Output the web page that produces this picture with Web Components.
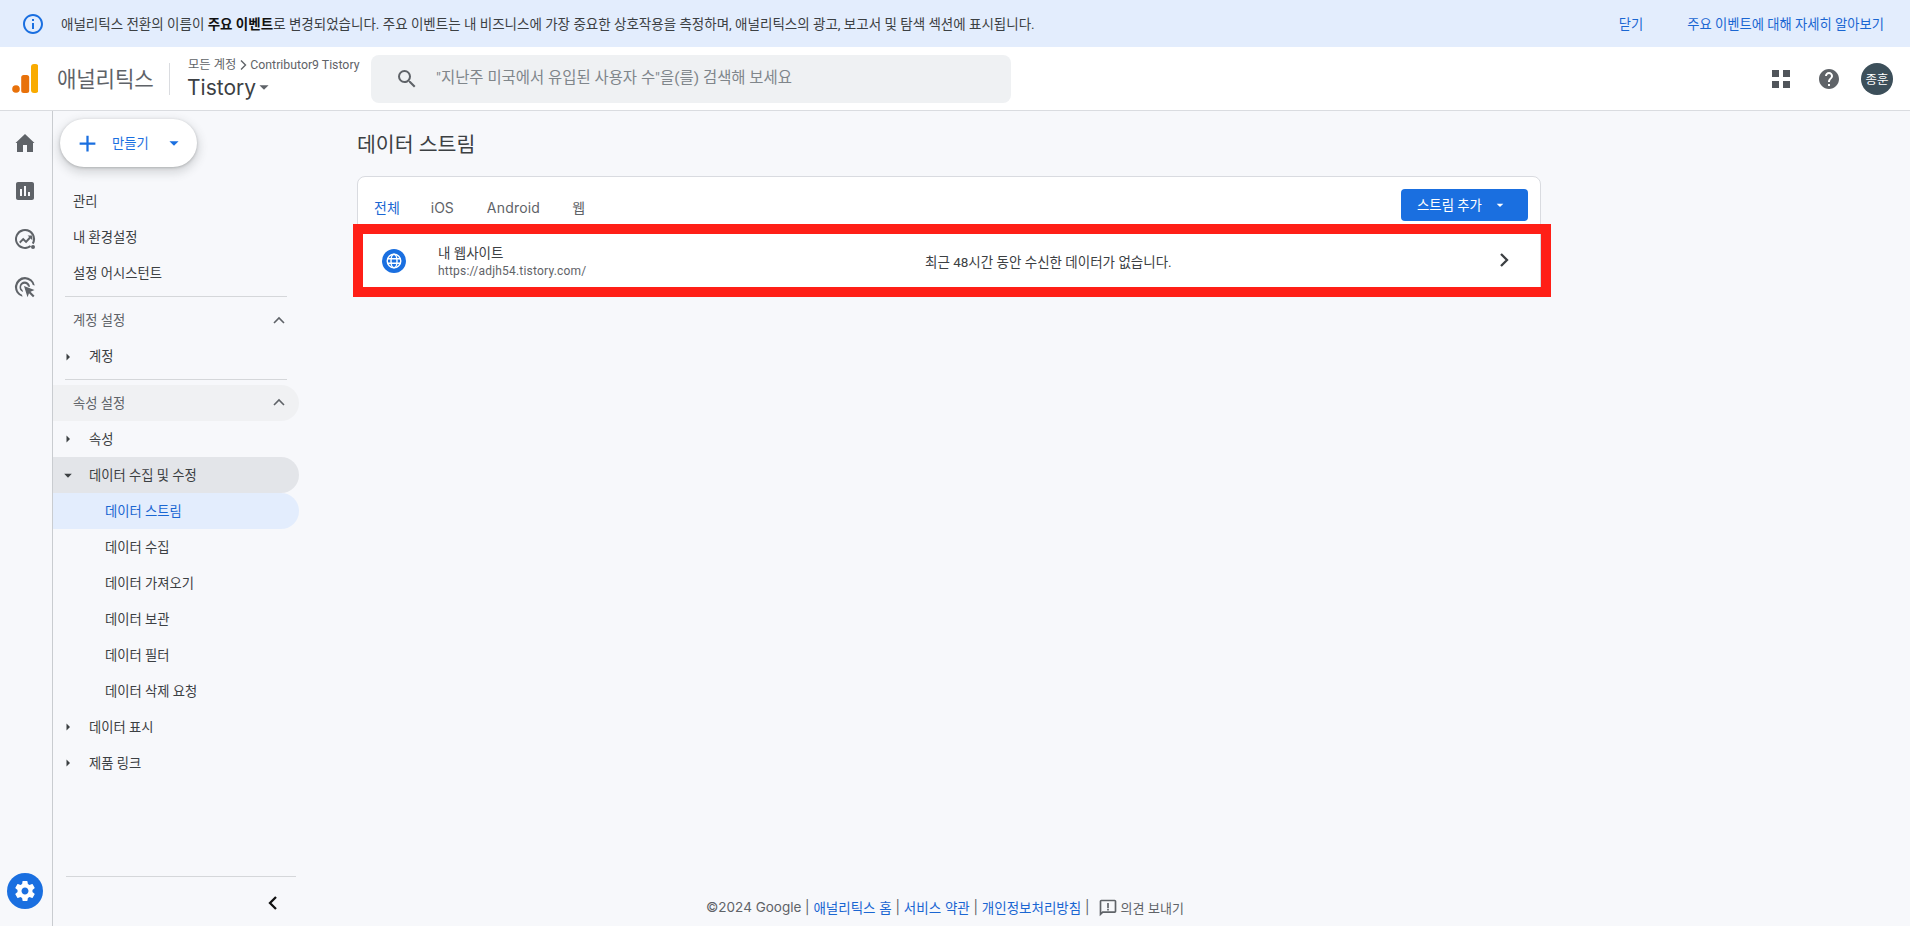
<!DOCTYPE html>
<html lang="ko"><head><meta charset="utf-8"><title>데이터 스트림</title>
<style>
html,body{margin:0;height:100%;overflow:hidden}
body{font-family:Roboto,"Noto Sans CJK KR",sans-serif;background:#f7f8fb;color:#202124}
</style></head><body>
<ga-app>
<ga-banner slot="banner"></ga-banner>
<ga-header slot="header"></ga-header>
<ga-rail slot="rail"></ga-rail>
<ga-sidebar slot="sidebar">
  <ga-nav plain>관리</ga-nav>
  <ga-nav plain>내 환경설정</ga-nav>
  <ga-nav plain>설정 어시스턴트</ga-nav>
  <ga-sep></ga-sep>
  <ga-nav section>계정 설정</ga-nav>
  <ga-nav caret="right">계정</ga-nav>
  <ga-sep tight></ga-sep>
  <ga-nav section hover>속성 설정</ga-nav>
  <ga-nav caret="right">속성</ga-nav>
  <ga-nav caret="down" open>데이터 수집 및 수정</ga-nav>
  <ga-nav child active>데이터 스트림</ga-nav>
  <ga-nav child>데이터 수집</ga-nav>
  <ga-nav child>데이터 가져오기</ga-nav>
  <ga-nav child>데이터 보관</ga-nav>
  <ga-nav child>데이터 필터</ga-nav>
  <ga-nav child>데이터 삭제 요청</ga-nav>
  <ga-nav caret="right">데이터 표시</ga-nav>
  <ga-nav caret="right">제품 링크</ga-nav>
</ga-sidebar>
<ga-main slot="main">
  <ga-stream-card></ga-stream-card>
</ga-main>
</ga-app>
<script>
function def(name,html){
  customElements.define(name,class extends HTMLElement{
    constructor(){super();this.attachShadow({mode:'open'}).innerHTML=typeof html==='function'?html(this):html;}
  });
}
const G=`<path d="M7 10l5 5 5-5z"/>`;
const INTER=`Inter,"Noto Sans CJK KR",sans-serif`;
def('ga-app',`<style>
:host{display:flex;flex-direction:column;height:926px;width:1910px}
.body{flex:1;display:flex;min-height:0}
</style><slot name="banner"></slot><slot name="header"></slot>
<div class="body"><slot name="rail"></slot><slot name="sidebar"></slot><slot name="main"></slot></div>`);

def('ga-banner',`<style>
:host{display:flex;align-items:center;height:47px;box-sizing:border-box;padding-bottom:1px;background:#e3edfd;font-size:13.500px;color:#3c4043;flex:none}
svg{width:24px;height:24px;fill:#1a6fe0;margin-left:21px;margin-right:16px;flex:none;position:relative;top:1px}
.t{flex:1;white-space:nowrap}
b{color:#111;font-weight:700}
a{color:#1a66d2;margin-right:44px;white-space:nowrap;font-size:13.300px}
a:last-child{margin-right:26px}
</style>
<svg viewBox="0 0 24 24"><path d="M11 7h2v2h-2zm0 4h2v6h-2zm1-9C6.480 2 2 6.480 2 12s4.480 10 10 10 10-4.480 10-10S17.520 2 12 2zm0 18c-4.410 0-8-3.590-8-8s3.590-8 8-8 8 3.590 8 8-3.590 8-8 8z"/></svg>
<span class="t">애널리틱스 전환의 이름이 <b>주요 이벤트</b>로 변경되었습니다. 주요 이벤트는 내 비즈니스에 가장 중요한 상호작용을 측정하며, 애널리틱스의 광고, 보고서 및 탐색 섹션에 표시됩니다.</span>
<a>닫기</a><a>주요 이벤트에 대해 자세히 알아보기</a>`);

def('ga-header',`<style>
:host{display:flex;align-items:center;height:64px;box-sizing:border-box;background:#fff;border-bottom:1px solid #dadce0;flex:none;position:relative;color:#5f6368}
.logo{width:26px;height:29px;margin-left:12px;flex:none}
.name{font-size:21.200px;margin-left:19px;width:96px;white-space:nowrap;letter-spacing:-.2px;position:relative;top:-1px}
.div{width:1px;height:32px;background:#dadce0;margin:0 18px 0 16px;flex:none}
.acct{width:183px;flex:none;line-height:1}
.crumb{font-size:12.300px;display:flex;align-items:center;white-space:nowrap;height:16px;position:relative;top:1px}
.crumb svg{width:14px;height:14px;fill:none;stroke:#5f6368;stroke-width:1.400}
.prop{font-family:${INTER};font-size:21px;color:#3c4043;display:flex;align-items:center;height:28px;margin:1px 0 0 -1px}
.prop svg{width:22px;height:22px;fill:#5f6368;margin-left:-3px}
.search{width:640px;height:48px;background:#eff1f3;border-radius:8px;display:flex;align-items:center;flex:none}
.search svg{width:24px;height:24px;fill:#5f6368;margin-left:24px;margin-right:17px}
.search span{font-size:15.450px;color:#80868b;position:relative;top:-3px;white-space:nowrap}
.r{margin-left:auto;display:flex;align-items:center}
.apps{width:18px;height:18px;display:grid;grid-template-columns:7px 7px;grid-auto-rows:7px;gap:4px}
.apps i{background:#50555a}
.help{width:24px;height:24px;fill:#5f6368;margin-left:27px;margin-right:20px}
.av{width:32px;height:32px;border-radius:50%;background:#3c4f5a;color:#fff;font-size:12.500px;display:flex;align-items:center;justify-content:center;margin-right:17px;white-space:nowrap}
</style>
<svg class="logo" viewBox="0 0 26 29"><circle cx="4" cy="25" r="3.800" fill="#e8710a"/><rect x="9.200" y="11" width="8" height="18" rx="2.500" fill="#e8710a"/><rect x="19" y="0" width="7.400" height="29" rx="3" fill="#f9ab00"/></svg>
<div class="name">애널리틱스</div><div class="div"></div>
<div class="acct"><div class="crumb">모든 계정<svg viewBox="0 0 14 14"><path d="M5 2.500l4.500 4.500L5 11.500"/></svg>Contributor9 Tistory</div>
<div class="prop">Tistory<svg viewBox="0 0 24 24">${G}</svg></div></div>
<div class="search"><svg viewBox="0 0 24 24"><path d="M15.500 14h-.79l-.28-.27A6.470 6.470 0 0 0 16 9.500 6.500 6.500 0 1 0 9.500 16c1.610 0 3.090-.59 4.230-1.570l.27.28v.79l5 4.990L20.490 19l-4.990-5zm-6 0C7.010 14 5 11.990 5 9.500S7.010 5 9.500 5 14 7.010 14 9.500 11.990 14 9.500 14z"/></svg><span>"지난주 미국에서 유입된 사용자 수"을(를) 검색해 보세요</span></div>
<div class="r"><div class="apps"><i></i><i></i><i></i><i></i></div>
<svg class="help" viewBox="0 0 24 24"><path d="M12 2C6.480 2 2 6.480 2 12s4.480 10 10 10 10-4.480 10-10S17.520 2 12 2zm1 17h-2v-2h2v2zm2.070-7.750l-.9.92C13.450 12.900 13 13.500 13 15h-2v-.5c0-1.100.45-2.100 1.170-2.830l1.240-1.260c.37-.36.59-.86.59-1.410 0-1.100-.9-2-2-2s-2 .9-2 2H8c0-2.210 1.790-4 4-4s4 1.790 4 4c0 .88-.36 1.680-.93 2.250z"/></svg>
<div class="av">종훈</div></div>`);

def('ga-rail',`<style>
:host{display:flex;flex-direction:column;align-items:center;width:52px;border-right:1px solid #c9ccd0;flex:none;box-sizing:content-box;padding-top:20px}
svg.i{width:24px;height:24px;fill:#5f6368;margin:0 2px 24px 0;flex:none}
.s{margin-top:auto;margin-bottom:17px;margin-right:2px;width:36px;height:36px;border-radius:50%;background:#1a6fe0;display:flex;align-items:center;justify-content:center}
.s svg{width:24px;height:24px;fill:#fff}
</style>
<svg class="i" viewBox="0 0 24 24"><path d="M10 21v-7h4v7h6v-9h1.500L12 3 2.500 12H4v9z"/></svg>
<svg class="i" viewBox="0 0 24 24"><path d="M19 3H5c-1.100 0-2 .9-2 2v14c0 1.100.9 2 2 2h14c1.100 0 2-.9 2-2V5c0-1.100-.9-2-2-2zM9 17H7v-7h2v7zm4 0h-2V7h2v10zm4 0h-2v-4h2v4z"/></svg>
<svg class="i" viewBox="0 0 24 24"><path d="M12 2a10 10 0 1 0 6.200 17.840l-1.300-1.500A8 8 0 1 1 20 12c0 1.500-.4 2.900-1.100 4.100l1.700 1.050A10 10 0 0 0 12 2z"/><path d="M6.200 14.700l4-4 2.800 2.800 3.100-3.400-1.500-1.500h4.700v4.700l-1.700-1.700-4.500 4.700-2.900-2.900-3 3z"/><circle cx="20" cy="20" r="2"/></svg>
<svg class="i" viewBox="0 0 24 24"><path d="M12 2a10 10 0 0 0-2.500 19.700l-.5-2A8 8 0 1 1 19.800 10l2 .5A10 10 0 0 0 12 2z"/><path d="M12 6.500a5.500 5.500 0 0 0-2 10.600l-.5-2.100a3.500 3.500 0 1 1 5.500-3.500l2 .5A5.500 5.500 0 0 0 12 6.500z"/><path d="M11 11l10.500 4-4 1.700 4 4-1.500 1.500-4-4-1.500 4z"/></svg>
<div class="s"><svg viewBox="0 0 24 24"><path d="M19.430 12.980c.04-.32.07-.64.07-.98s-.03-.66-.07-.98l2.110-1.650c.19-.15.24-.42.12-.64l-2-3.460c-.12-.22-.39-.3-.61-.22l-2.490 1c-.52-.4-1.080-.73-1.690-.98l-.38-2.650A.488.488 0 0 0 14 2h-4c-.25 0-.46.18-.49.42l-.38 2.650c-.61.25-1.170.59-1.690.98l-2.490-1c-.23-.09-.49 0-.61.22l-2 3.460c-.13.22-.07.49.12.64l2.110 1.650c-.04.32-.07.65-.07.98s.03.66.07.98l-2.110 1.650c-.19.15-.24.42-.12.64l2 3.460c.12.22.39.3.61.22l2.490-1c.52.4 1.080.73 1.690.98l.38 2.650c.03.24.24.42.49.42h4c.25 0 .46-.18.49-.42l.38-2.650c.61-.25 1.170-.59 1.690-.98l2.490 1c.23.09.49 0 .61-.22l2-3.460c.12-.22.07-.49-.12-.64l-2.110-1.650zM12 15.500c-1.930 0-3.500-1.570-3.500-3.500s1.570-3.500 3.500-3.500 3.500 1.570 3.500 3.500-1.570 3.500-3.500 3.500z"/></svg></div>`);

def('ga-sidebar',`<style>
:host{display:flex;flex-direction:column;width:247px;flex:none}
.create{width:137px;height:48px;margin:8px 0 16px 7px;border-radius:24px;background:#fff;box-shadow:0 1px 3px rgba(60,64,67,.3),0 4px 8px 3px rgba(60,64,67,.15);display:flex;align-items:center;color:#1a6fe0;font-size:13.300px;flex:none;box-sizing:border-box;padding-bottom:1px}
.create svg.p{width:27px;height:27px;fill:#1a6fe0;margin-left:14px;margin-right:11px;margin-top:1px}
.create svg.c{width:22px;height:22px;fill:#1a6fe0;margin-left:14px;margin-top:1px}
nav{display:flex;flex-direction:column}
.bot{margin-top:auto;margin-left:13px;width:230px;border-top:1px solid #d5d7da;height:50px;display:flex;justify-content:flex-end;box-sizing:border-box;padding-right:11px;flex:none}
.bot svg{width:24px;height:24px;fill:none;stroke:#111;stroke-width:2.300;margin-top:14px}
</style>
<div class="create"><svg class="p" viewBox="0 0 24 24"><path d="M19 13h-6v6h-2v-6H5v-2h6V5h2v6h6v2z"/></svg>만들기<svg class="c" viewBox="0 0 24 24">${G}</svg></div>
<nav><slot></slot></nav>
<div class="bot"><svg viewBox="0 0 24 24"><path d="M15 6l-6 6 6 6"/></svg></div>`);

def('ga-sep',`<style>:host{display:block;height:1px;background:#d5d7da;margin:5.250px 12px;width:222px}
:host([tight]){margin:4.750px 12px 4.750px}</style>`);

def('ga-nav',el=>{
  const caret=el.getAttribute('caret');
  const sec=el.hasAttribute('section');
  const pad=el.hasAttribute('child')?52:sec||el.hasAttribute('plain')?20:36;
  const bg=el.hasAttribute('active')?'#e3edfd':el.hasAttribute('open')?'#e3e5e9':el.hasAttribute('hover')?'#f0f1f3':'transparent';
  const col=el.hasAttribute('active')?'#1a66d2':sec?'#5f6368':'#3c4043';
  return `<style>
:host{display:flex;align-items:center;height:36px;width:246px;font-size:13.300px;box-sizing:border-box;padding-left:${pad}px;padding-bottom:2px;background:${bg};color:${col};border-radius:0 18px 18px 0;position:relative;white-space:nowrap;flex:none}
.car{position:absolute;left:7px;top:10px;width:16px;height:16px;fill:#3c4043}
.up{position:absolute;right:9px;top:7px;width:22px;height:22px;fill:none;stroke:#5f6368;stroke-width:1.600}
</style>
${caret==='right'?'<svg class="car" viewBox="0 0 16 16"><path d="M6.500 4.500L10 8l-3.500 3.500z"/></svg>':''}
${caret==='down'?'<svg class="car" viewBox="0 0 16 16"><path d="M4.200 6.800h7.600L8 10.800z"/></svg>':''}
<slot></slot>
${sec?'<svg class="up" viewBox="0 0 22 22"><path d="M6 13l5-5 5 5"/></svg>':''}`;
});

def('ga-main',`<style>
:host{flex:1;display:flex;flex-direction:column;padding:0 369px 0 57px;min-width:0;box-sizing:border-box}
h1{font-size:20.500px;font-weight:400;color:#3c4043;margin:20px 0 0;line-height:28px;flex:none;white-space:nowrap}
.f{margin-top:auto;height:36px;padding-right:8px;display:flex;align-items:center;justify-content:center;font-family:${INTER};font-size:13.500px;color:#5f6368;white-space:pre;flex:none;position:relative;top:-1px}
.f a{color:#1a66d2}
.f svg{width:20px;height:20px;fill:#5f6368;margin:2px 3px 0 8px}
.f .fb{font-size:13px}
</style>
<h1>데이터 스트림</h1>
<slot></slot>
<div class="f">©2024 Google | <a>애널리틱스 홈</a> | <a>서비스 약관</a> | <a>개인정보처리방침</a> |<svg viewBox="0 0 24 24"><path d="M20 2H4c-1.100 0-2 .9-2 2v18l4-4h14c1.100 0 2-.9 2-2V4c0-1.100-.9-2-2-2zm0 14H5.200L4 17.200V4h16v12z"/><path d="M11 6h2v6h-2zm0 7h2v2h-2z"/></svg><span class="fb">의견 보내기</span></div>`);

def('ga-stream-card',`<style>
:host{display:block;margin-top:17px;background:#fff;border:1px solid #d9dbe0;border-radius:8px 8px 0 0;width:1184px;box-sizing:border-box;position:relative;flex:none}
.top{display:flex;height:57px;position:relative;font-family:${INTER};font-size:14px;color:#5f6368}
.tabs{display:flex;padding:21px 0 0 16px;line-height:20px}
.tabs span{margin-right:32px;white-space:nowrap}
.tabs .on{color:#1a66d2;margin-right:31px}
.tabs .ios{margin-right:33px}
.tabs .and{letter-spacing:.2px}
.btn{position:absolute;right:12px;top:12px;width:127px;height:32px;background:#1a6fe0;color:#fff;font-family:Roboto,"Noto Sans CJK KR",sans-serif;font-size:13.400px;border-radius:4px;display:flex;align-items:center;box-sizing:border-box;padding:0 0 2px 16px;white-space:nowrap}
.btn svg{width:16px;height:16px;fill:#fff;margin:2px 0 0 10px}
.row{height:53px;display:flex;align-items:center;position:relative;background:#fff}
.glob{width:24px;height:24px;margin-left:24px;flex:none}
.tx{margin-left:32px;width:487px;flex:none;padding-top:2px}
.a{font-size:13.500px;color:#3c4043;line-height:18px}
.b{font-size:12px;color:#5f6368;line-height:18px;letter-spacing:.2px}
.msg{font-size:13.500px;color:#3c4043;white-space:nowrap}
.chev{position:absolute;right:24px;top:14px;width:24px;height:24px;fill:none;stroke:#3c4043;stroke-width:2.300}
.red{position:absolute;left:-5px;right:-11px;top:-10px;bottom:-10px;border:10px solid #ff1f17;pointer-events:none;box-sizing:border-box}
</style>
<div class="top"><div class="tabs"><span class="on">전체</span><span class="ios">iOS</span><span class="and">Android</span><span>웹</span></div>
<div class="btn">스트림 추가<svg viewBox="0 0 24 24">${G}</svg></div></div>
<div class="row">
<svg class="glob" viewBox="0 0 24 24"><circle cx="12" cy="12" r="12" fill="#1a6fe0"/><g fill="none" stroke="#fff" stroke-width="1.400"><circle cx="12" cy="12" r="6.800"/><ellipse cx="12" cy="12" rx="3" ry="6.800"/><path d="M5.500 9.700h13M5.500 14.300h13"/></g></svg>
<div class="tx"><div class="a">내 웹사이트</div><div class="b">https://adjh54.tistory.com/</div></div>
<div class="msg">최근 48시간 동안 수신한 데이터가 없습니다.</div>
<svg class="chev" viewBox="0 0 24 24"><path d="M9 6l6 6-6 6"/></svg>
<div class="red"></div></div>`);
</script>
</body></html>
